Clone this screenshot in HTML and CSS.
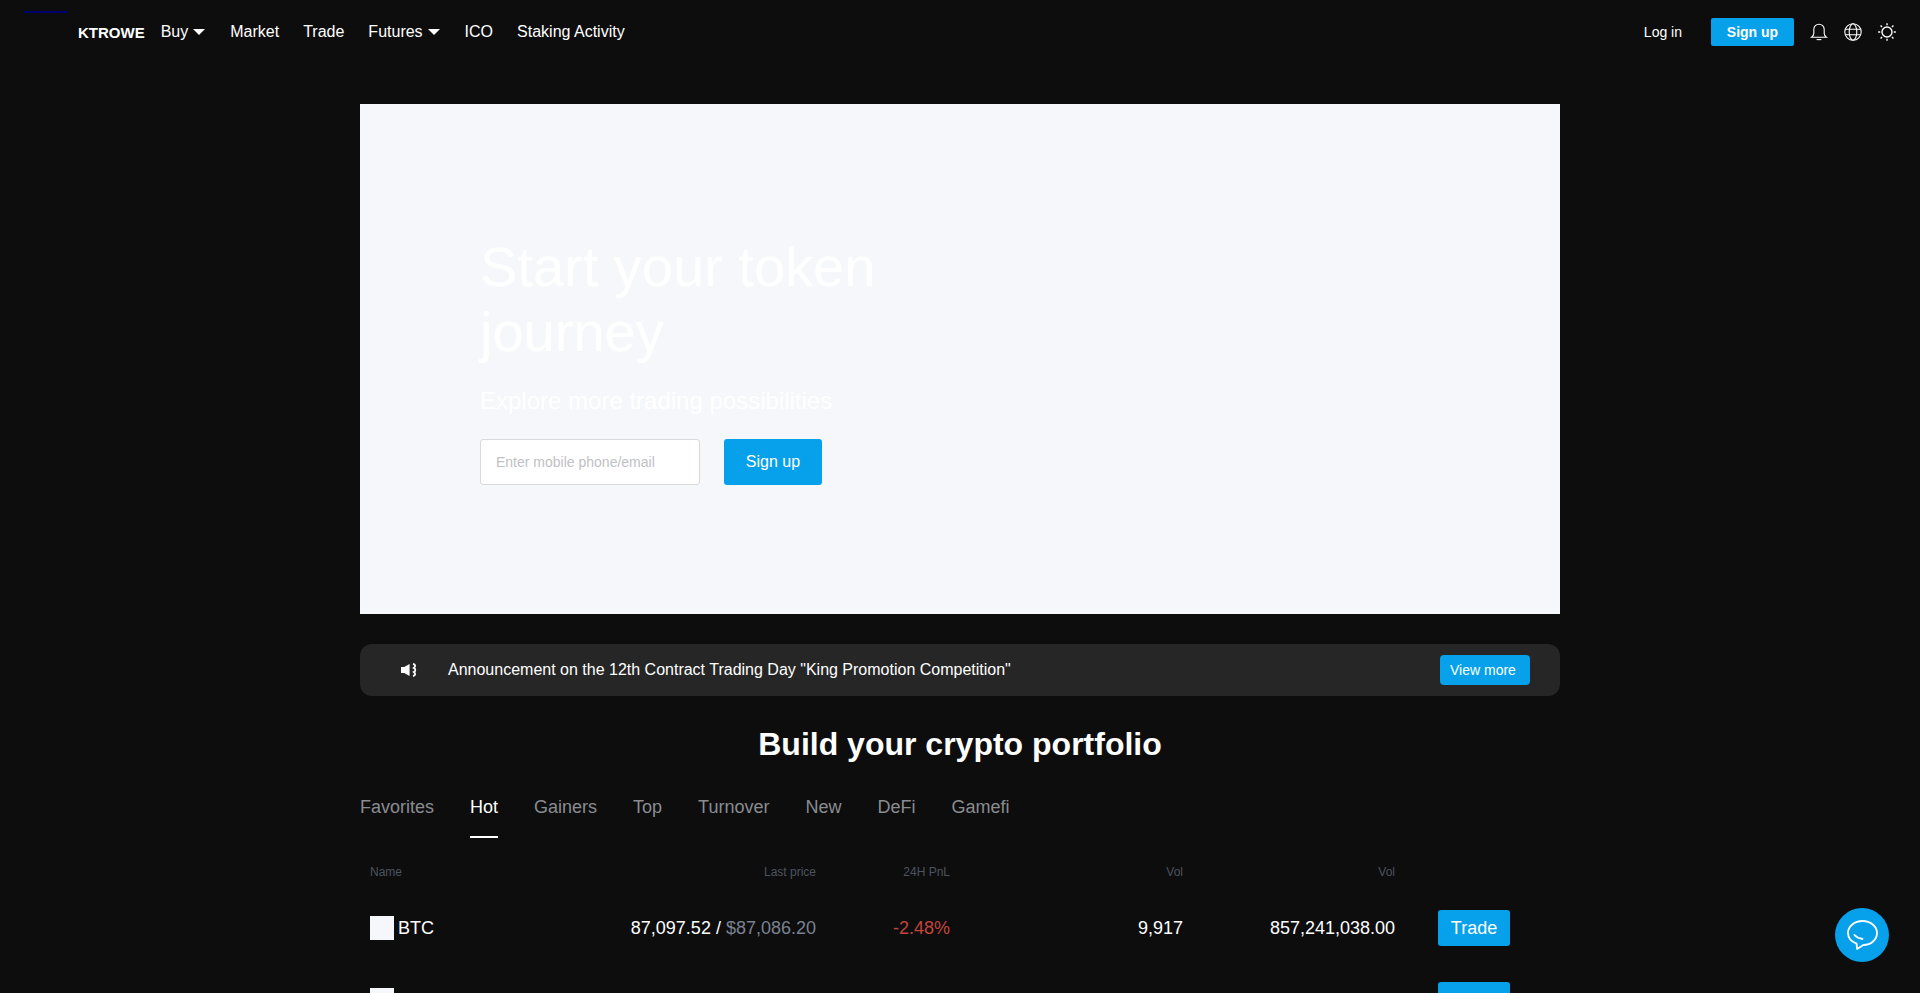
FILE: index.html
```html
<!DOCTYPE html>
<html>
<head>
    <title>KTROWE</title>
    <link rel="stylesheet" href="styles.css">
</head>
<body>
    <span class="stray-link"></span>
    <header class="nav">
        <div class="nav-left">
            <a class="logo">KTROWE</a>
            <a class="nav-item">Buy<i class="caret"></i></a>
            <a class="nav-item">Market</a>
            <a class="nav-item">Trade</a>
            <a class="nav-item">Futures<i class="caret"></i></a>
            <a class="nav-item">ICO</a>
            <a class="nav-item">Staking Activity</a>
        </div>
        <div class="nav-right">
            <a class="login">Log in</a>
            <a class="signup-small">Sign up</a>
            <div class="nav-icons">
                <svg width="18" height="18" viewBox="0 0 18 18" fill="none" stroke="#fff" stroke-width="1.1">
                    <path d="M9 1.2a5.2 5.2 0 0 0-5.2 5.2v4.2c0 1.6-.9 2.6-2.2 3.6h14.800c-1.3-1-2.2-2-2.2-3.6V6.4A5.2 5.2 0 0 0 9 1.2z"/>
                    <path d="M6.6 16.6h4.8"/>
                </svg>
                <svg width="18" height="18" viewBox="0 0 18 18" fill="none" stroke="#fff" stroke-width="1.1">
                    <circle cx="9" cy="9" r="8.2"/>
                    <ellipse cx="9" cy="9" rx="3.8" ry="8.2"/>
                    <path d="M1.4 6.2h15.2M1.4 11.8h15.2"/>
                </svg>
                <svg width="18" height="18" viewBox="0 0 18 18" fill="none" stroke="#fff" stroke-width="1.4">
                    <circle cx="9" cy="9" r="5"/>
                    <path d="M9 .2v2M9 15.8v2M.2 9h2M15.8 9h2M2.6 2.6L4 4M14 14l1.4 1.4M2.6 15.4L4 14M14 4l1.4-1.4"/>
                </svg>
            </div>
        </div>
    </header>

    <main class="main">
        <section class="hero">
            <h1 class="hero-title">Start your token journey</h1>
            <p class="hero-sub">Explore more trading possibilities</p>
            <div class="hero-form">
                <input class="hero-input" type="text" placeholder="Enter mobile phone/email">
                <a class="hero-btn">Sign up</a>
            </div>
        </section>

        <section class="notice">
            <svg class="notice-icon" width="16" height="16" viewBox="0 0 16 16" fill="#fff">
                <path d="M0 5h3.2L8.6 2v12l-5.4-3H0z"/>
                <path d="M12 2c2.6.6 2.8 2.2.8 4 2 .8 2 3 0 4 2 1.6 1.8 3.4-.8 4" fill="none" stroke="#fff" stroke-width="1.8"/>
            </svg>
            <span class="notice-text">Announcement on the 12th Contract Trading Day "King Promotion Competition"</span>
            <a class="notice-btn">View more</a>
        </section>

        <h2 class="section-title">Build your crypto portfolio</h2>

        <nav class="tabs">
            <a class="tab">Favorites</a>
            <a class="tab active">Hot</a>
            <a class="tab">Gainers</a>
            <a class="tab">Top</a>
            <a class="tab">Turnover</a>
            <a class="tab">New</a>
            <a class="tab">DeFi</a>
            <a class="tab">Gamefi</a>
        </nav>

        <div class="table">
            <div class="row head">
                <div>Name</div>
                <div class="num">Last price</div>
                <div class="num">24H PnL</div>
                <div class="num">Vol</div>
                <div class="num">Vol</div>
                <div></div>
            </div>
            <div class="row">
                <div class="coin"><span class="coin-icon"></span>BTC</div>
                <div class="num">87,097.52 / <span class="muted">$87,086.20</span></div>
                <div class="num down">-2.48%</div>
                <div class="num">9,917</div>
                <div class="num">857,241,038.00</div>
                <div class="action"><a class="trade-btn">Trade</a></div>
            </div>
            <div class="row">
                <div class="coin"><span class="coin-icon"></span></div>
                <div></div>
                <div></div>
                <div></div>
                <div></div>
                <div class="action"><a class="trade-btn"></a></div>
            </div>
        </div>
    </main>

    <a class="chat">
        <svg width="32" height="32" viewBox="0 0 32 32" fill="none" stroke="#fff" stroke-width="1.8" stroke-linecap="round" stroke-linejoin="round">
            <path d="M16.5 2C8.5 2 2 7.4 2 14c0 4.6 3.2 8.6 8.6 10.6l.4 5.4 6.4-4C25 26 31 20.6 31 14 31 7.4 24.5 2 16.5 2z"/>
            <path d="M8.5 16c2 2.2 4.8 3.6 8 4"/>
        </svg>
    </a>
</body>
</html>
```

FILE: styles.css
```css
html,
body {
    margin: 0;
    padding: 0;
    height: 100%;
    overflow: hidden;
    background-color: #0d0d0e;
    color: #fff;
    font-family: "Liberation Sans", Arial, sans-serif;
}

a {
    color: inherit;
    text-decoration: none;
    cursor: pointer;
}

.stray-link {
    position: absolute;
    left: 24px;
    top: 11px;
    width: 44px;
    height: 2px;
    background-color: #00006e;
}

/* top bar */
.nav {
    display: flex;
    justify-content: space-between;
    align-items: center;
    height: 63px;
    padding: 0 24px 0 78px;
}

.nav-left,
.nav-right,
.nav-icons {
    display: flex;
    align-items: center;
}

.nav-left {
    gap: 24px;
}

.logo {
    font-size: 15px;
    font-weight: 700;
    margin-right: -8px;
    padding-top: 2px;
}

.nav-item {
    display: flex;
    align-items: center;
    font-size: 16px;
}

.caret {
    width: 0;
    height: 0;
    margin: 0 1px 0 5px;
    border-left: 6px solid transparent;
    border-right: 6px solid transparent;
    border-top: 6px solid #fff;
}

.login {
    font-size: 14px;
    margin-right: 29px;
}

.signup-small {
    width: 83px;
    height: 28px;
    line-height: 28px;
    text-align: center;
    font-size: 14px;
    font-weight: 700;
    background-color: #06a1ea;
    border-radius: 2px;
    margin-right: 16px;
}

.nav-icons {
    gap: 16px;
}

.nav-icons svg {
    display: block;
}

/* main column */
.main {
    width: 1200px;
    margin: 41px auto 0;
}

.hero {
    box-sizing: border-box;
    height: 510px;
    padding: 130px 120px 0;
    background-color: #f5f7fb;
}

.hero-title {
    margin: 0;
    width: 440px;
    font-size: 56px;
    line-height: 65px;
    font-weight: 400;
    color: #fff;
}

.hero-sub {
    margin: 23px 0 0;
    font-size: 24px;
    line-height: 28px;
    color: #fff;
}

.hero-form {
    display: flex;
    gap: 24px;
    margin-top: 24px;
}

.hero-input {
    box-sizing: border-box;
    width: 220px;
    height: 46px;
    padding: 0 15px;
    font-family: inherit;
    font-size: 14px;
    background-color: #fff;
    border: 1px solid #d8d9dc;
    border-radius: 3px;
    outline: none;
}

.hero-input::placeholder {
    color: #c0c1c4;
}

.hero-btn {
    width: 98px;
    height: 46px;
    line-height: 46px;
    text-align: center;
    font-size: 16px;
    background-color: #06a1ea;
    border-radius: 3px;
}

/* announcement */
.notice {
    display: flex;
    align-items: center;
    height: 52px;
    margin-top: 30px;
    padding: 0 30px 0 41px;
    background-color: #262626;
    border-radius: 12px;
}

.notice-text {
    flex: 1;
    margin-left: 31px;
    font-size: 16px;
}

.notice-btn {
    box-sizing: border-box;
    width: 90px;
    height: 30px;
    line-height: 30px;
    padding-left: 10px;
    font-size: 14px;
    background-color: #06a1ea;
    border-radius: 4px;
}

.section-title {
    margin: 30px 0 0;
    font-size: 32px;
    line-height: 37px;
    font-weight: 700;
    text-align: center;
}

/* tabs */
.tabs {
    display: flex;
    gap: 36px;
    margin-top: 30px;
}

.tab {
    height: 39px;
    font-size: 18px;
    line-height: 21px;
    color: #8a8c90;
    padding-top: 4px;
}

.tab.active {
    color: #fff;
    border-bottom: 2px solid #fff;
}

/* table */
.table {
    padding-left: 10px;
}

.row {
    display: grid;
    grid-template-columns: 160px 286px 134px 233px 212px 115px;
    align-items: center;
    height: 72px;
    font-size: 18px;
}

.row.head {
    height: 41px;
    margin-top: 13px;
    font-size: 12px;
    color: #4d535e;
}

.num {
    text-align: right;
}

.muted {
    color: #7a8290;
}

.down {
    color: #c4453c;
}

.coin {
    display: flex;
    align-items: center;
}

.coin-icon {
    width: 24px;
    height: 24px;
    margin-right: 4px;
    background-color: #f5f7fb;
}

.action {
    display: flex;
    justify-content: flex-end;
}

.trade-btn {
    width: 72px;
    height: 36px;
    line-height: 36px;
    text-align: center;
    background-color: #06a1ea;
    border-radius: 3px;
}

/* floating chat */
.chat {
    position: fixed;
    left: 1835px;
    top: 908px;
    width: 54px;
    height: 54px;
    display: flex;
    align-items: center;
    justify-content: center;
    background-color: #06a1ea;
    border-radius: 50%;
}
```
